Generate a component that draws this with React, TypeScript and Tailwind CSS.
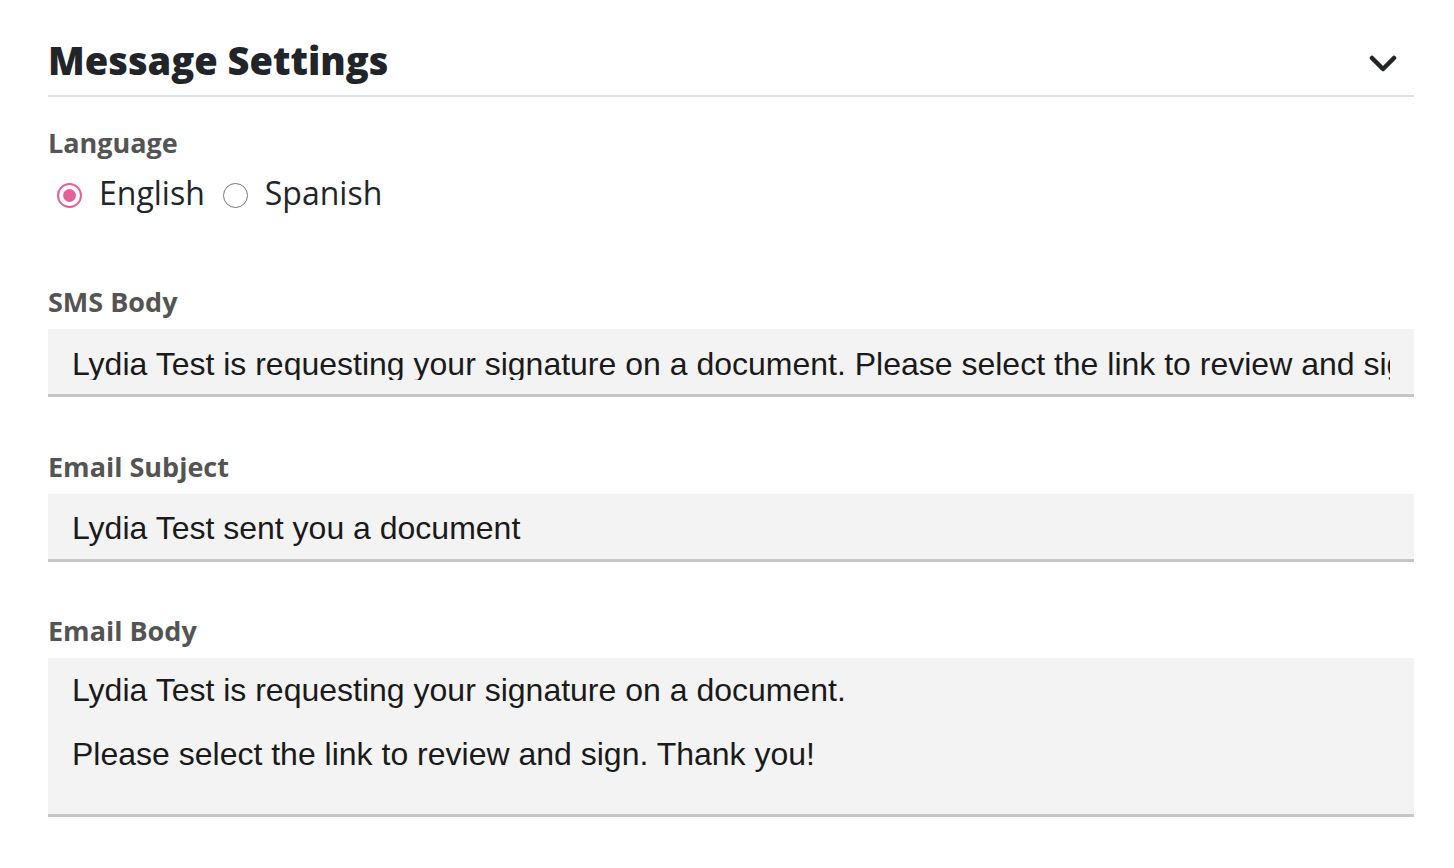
import React, { useState } from 'react';

const Chevron: React.FC = () => (
    <svg width="28" height="18" viewBox="0 0 28 18" fill="none" className="mr-[17px] mt-[16px]">
        <polyline points="3,3 14,14 25,3" stroke="#212529" strokeWidth="4.5" strokeLinecap="round" strokeLinejoin="round" />
    </svg>
);

const Radio: React.FC<{ checked: boolean; label: string; onClick: () => void }> = ({ checked, label, onClick }) => (
    <button type="button" onClick={onClick} className="flex items-start cursor-pointer">
        {checked ? (
            <span className="mt-[10px] w-[25px] h-[25px] rounded-full border-2 border-[#e4609d] flex items-center justify-center bg-white">
                <span className="w-[13px] h-[13px] rounded-full bg-[#e4609d]" />
            </span>
        ) : (
            <span className="mt-[10px] w-[25px] h-[25px] rounded-full border-[1.5px] border-[#767676] bg-white" />
        )}
        <span className="ml-[17px] text-[32px] leading-[40px] text-[#212529]">{label}</span>
    </button>
);

const FieldLabel: React.FC<{ children: React.ReactNode; className?: string }> = ({ children, className }) => (
    <div className={`text-[27px] leading-[32px] font-bold text-[#545454] ${className ?? ''}`}>{children}</div>
);

const boxFont = { fontFamily: '"Liberation Sans", Arial, sans-serif' };

export default function App() {
    const [lang, setLang] = useState<'en' | 'es'>('en');

    return (
        <div className="w-[1454px] h-[868px] bg-white pl-[48px] pr-[40px]" style={{ fontFamily: '"Open Sans", sans-serif' }}>
            <div className="flex items-start justify-between pt-[39px] pb-[13px] border-b-2 border-[#e0e0e0]">
                <h1 className="text-[38px] leading-[43px] font-extrabold text-[#212529]">Message Settings</h1>
                <Chevron />
            </div>

            <FieldLabel className="mt-[30px]">Language</FieldLabel>
            <div className="flex items-start gap-[18px] mt-[14px] ml-[9px]">
                <Radio checked={lang === 'en'} label="English" onClick={() => setLang('en')} />
                <Radio checked={lang === 'es'} label="Spanish" onClick={() => setLang('es')} />
            </div>

            <FieldLabel className="mt-[73px]">SMS Body</FieldLabel>
            <div className="mt-[11px] h-[68px] bg-[#f3f3f3] border-b-[3px] border-[#c6c6c6] px-6 pt-[19px] text-[32px] leading-[32px] text-[#1a1a1a]" style={boxFont}>
                <div className="overflow-hidden whitespace-nowrap">
                    Lydia Test is requesting your signature on a document. Please select the link to review and sign. Thank you!
                </div>
            </div>

            <FieldLabel className="mt-[54px]">Email Subject</FieldLabel>
            <div className="mt-[11px] h-[68px] bg-[#f3f3f3] border-b-[3px] border-[#c6c6c6] px-6 pt-[18px] text-[32px] leading-[32px] text-[#1a1a1a]" style={boxFont}>
                Lydia Test sent you a document
            </div>

            <FieldLabel className="mt-[53px]">Email Body</FieldLabel>
            <div className="mt-[11px] h-[159px] bg-[#f3f3f3] border-b-[3px] border-[#c6c6c6] px-6 pt-4 text-[32px] leading-[32px] text-[#1a1a1a]" style={boxFont}>
                <p>Lydia Test is requesting your signature on a document.</p>
                <p className="mt-8">Please select the link to review and sign. Thank you!</p>
            </div>
        </div>
    );
}
